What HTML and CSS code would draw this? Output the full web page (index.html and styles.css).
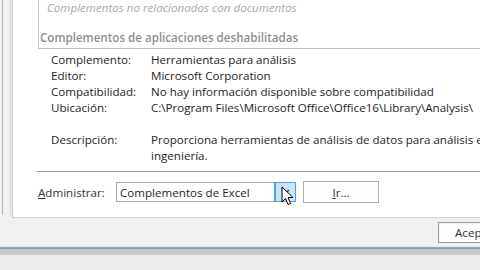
FILE: index.html
```html
<!DOCTYPE html>
<html>
<head>
<meta charset="utf-8">
<link rel="stylesheet" href="styles.css">
</head>
<body>
<div class="screen">
  <div class="main">
    <div class="gutter"></div>
    <div class="panel">
      <!-- Add-in list (scrolled) -->
      <div class="listbox">
        <div class="item-muted">Complementos no relacionados con documentos</div>
        <div class="group">Complementos de aplicaciones deshabilitadas</div>
      </div>

      <!-- Selected add-in details -->
      <div class="details">
        <div class="label">Complemento:</div><div class="value">Herramientas para análisis</div>
        <div class="label">Editor:</div><div class="value">Microsoft Corporation</div>
        <div class="label">Compatibilidad:</div><div class="value">No hay información disponible sobre compatibilidad</div>
        <div class="label">Ubicación:</div><div class="value">C:\Program Files\Microsoft Office\Office16\Library\Analysis\</div>
        <div class="label spacer"></div><div class="value spacer"></div>
        <div class="label">Descripción:</div><div class="value">Proporciona herramientas de análisis de datos para análisis es<br>ingeniería.</div>
      </div>

      <div class="rule"></div>

      <!-- Manage row -->
      <div class="manage">
        <span class="manage-label"><u>A</u>dministrar:</span>
        <div class="select">
          <span class="select-text">Complementos de Excel</span>
          <span class="select-arrow">
            <svg width="9" height="6" viewBox="0 0 9 6"><path d="M1 1 L4.5 4.5 L8 1" fill="none" stroke="#333" stroke-width="1.2"/></svg>
          </span>
          <svg class="cursor" width="13" height="20" viewBox="0 0 13 20"><path d="M1 1 L1 16 L4.5 12.5 L7 18.5 L9.5 17.5 L7 11.5 L12 11.5 Z" fill="#fff" stroke="#000" stroke-width="1" stroke-linejoin="round"/></svg>
        </div>
        <button class="btn go"><u>I</u>r...</button>
      </div>
    </div>
  </div>

  <div class="footer">
    <button class="btn ok">Acep</button>
  </div>
  <div class="taskline"></div>
  <div class="below"></div>
</div>
</body>
</html>
```

FILE: styles.css
```css
body {
  margin: 0;
  background-color: #f0f0f0;
  font-family: "Open Sans", "Noto Sans", sans-serif;
  font-size: 11.6px;
  color: #1e1e1e;
}

.screen {
  width: 480px;
  height: 270px;
  overflow: hidden;
  display: flex;
  flex-direction: column;
}

/* Dialog body */
.main {
  display: flex;
  height: 218px;
  flex: none;
}

.gutter {
  border-left: 1px solid #b4b4b4;
  margin-left: 2px;
  border-right: 1px solid #d4d4d4;
  box-sizing: border-box;
  width: 9px;
  height: 215px;
}

.panel {
  flex: 1;
  min-width: 0;
  background-color: #fff;
  border-left: 1px solid #c4c4c4;
  border-bottom: 1px solid #cfcfcf;
  margin-left: 1px;
}

/* List box */
.listbox {
  margin-left: 25px;
  height: 49px;
  border-left: 1px solid #c9c9c9;
  border-bottom: 1px solid #bdbdbd;
  box-sizing: border-box;
  white-space: nowrap;
}

.item-muted {
  font-style: italic;
  color: #a8a8a8;
  padding-left: 8px;
  line-height: 16px;
}

.group {
  font-weight: 600;
  color: #8f8f8f;
  padding-left: 1px;
  margin-top: 14px;
  line-height: 16px;
}

/* Details */
.details {
  display: grid;
  grid-template-columns: 100px 1fr;
  padding-left: 38px;
  padding-top: 3px;
  line-height: 16px;
  white-space: nowrap;
}

.value {
  overflow: hidden;
}

.spacer {
  height: 16px;
}

.rule {
  margin-left: 24px;
  margin-top: 7px;
  border-top: 1px solid #a0a0a0;
}

/* Manage row */
.manage {
  display: flex;
  align-items: center;
  padding-left: 25px;
  margin-top: 9px;
}

.manage-label {
  color: #333;
  width: 78px;
}

.select {
  position: relative;
  display: flex;
  align-items: center;
  width: 180px;
  height: 20px;
  border: 1px solid #a6a6a6;
  box-sizing: border-box;
  background-color: #fff;
}

.select-text {
  flex: 1;
  padding-left: 3px;
}

.select-arrow {
  display: flex;
  align-items: center;
  justify-content: center;
  width: 20px;
  height: 18px;
  background-color: #cce4f7;
  border-left: 1px solid #569de5;
  box-sizing: border-box;
  outline: 1px solid #569de5;
}

.cursor {
  position: absolute;
  left: 164px;
  top: 3px;
}

.btn {
  font-family: inherit;
  font-size: 11.6px;
  color: #333;
  background-color: #fdfdfd;
  border: 1px solid #adadad;
  box-sizing: border-box;
}

.go {
  margin-left: 7px;
  width: 76px;
  height: 22px;
}

/* Bottom bar */
.footer {
  height: 28px;
  display: flex;
  align-items: center;
  padding-left: 438px;
  flex: none;
}

.ok {
  flex: none;
  width: 42px;
  height: 21px;
  text-align: left;
  padding-left: 16px;
  border-color: #9a9a9a;
  border-right: none;
  box-shadow: inset 0 1px 0 #f4f4f4, inset 1px 0 0 #f4f4f4;
  overflow: hidden;
  white-space: nowrap;
}

.taskline {
  height: 9px;
  flex: none;
  background: linear-gradient(#d6e6f2 0, #d6e6f2 1px, #8fb0cc 1px, #7d9cb7 3px, #c6cace 3px, #c9c9c9 8px, #dcdcdc 9px);
}

.below {
  flex: 1;
  background-color: #ececec;
}
```
